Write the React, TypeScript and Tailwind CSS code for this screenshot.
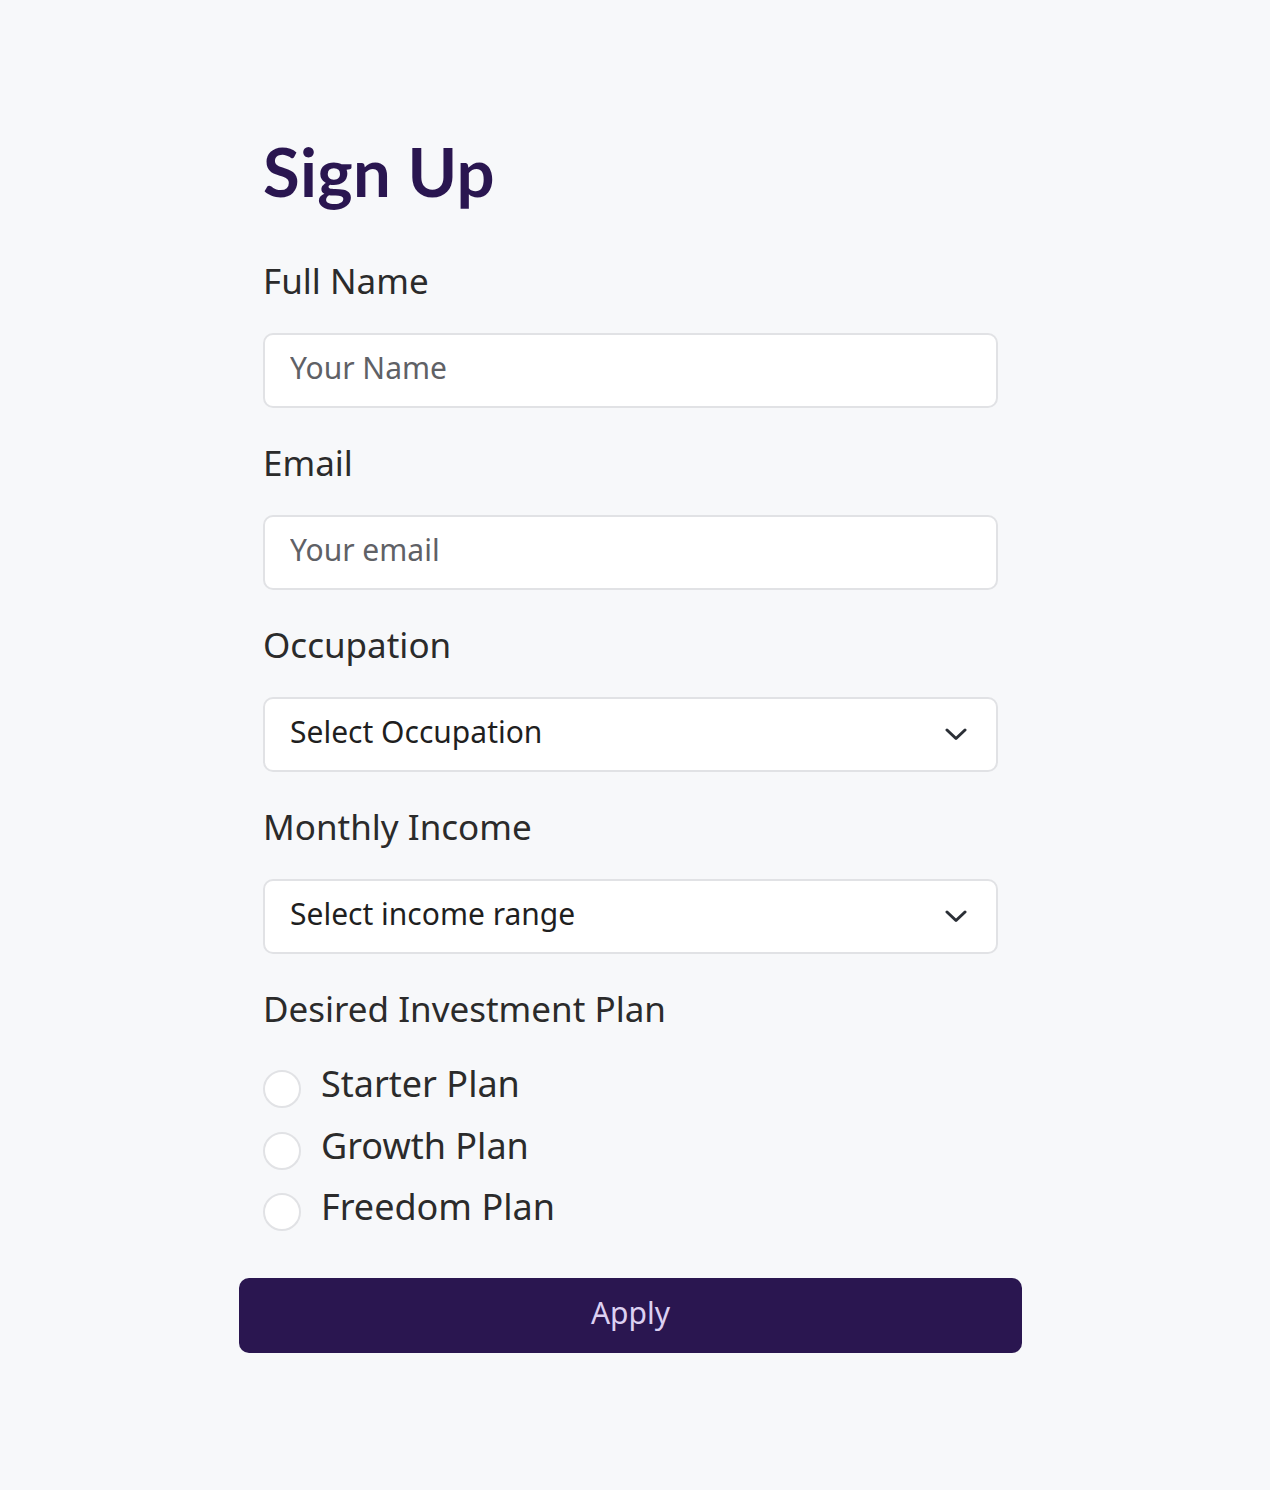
const plans = ["Starter Plan", "Growth Plan", "Freedom Plan"];

function Chevron() {
  return (
    <svg width="22" height="13" viewBox="0 0 22 13" fill="none" className="shrink-0">
      <path d="M2 2L11 10.5L20 2" stroke="#2b2f36" strokeWidth="3" strokeLinecap="round" strokeLinejoin="round" />
    </svg>
  );
}

export default function App() {
  return (
    <div className="min-h-[1490px] bg-[#f7f8fa] font-['Noto_Sans',sans-serif] text-[#2b2b2b]">
      <div className="ml-[239px] w-[783px] pt-[130px] pl-[24px]">
        <h1 className="font-['Lato',sans-serif] text-[67px] font-bold leading-[82px] tracking-[0.3px] text-[#2a1650]">
          Sign Up
        </h1>
        <form className="mt-[47px]">
          <label className="block text-[35px] leading-[44px]">Full Name</label>
          <input
            placeholder="Your Name"
            className="mt-[30px] block h-[75px] w-[735px] rounded-[10px] border-2 border-[#e1e2e5] bg-white px-[25px] pb-[6px] text-[30px] placeholder:text-[#5f6166] focus:outline-none"
          />
          <label className="mt-[33px] block text-[35px] leading-[44px]">Email</label>
          <input
            placeholder="Your email"
            className="mt-[30px] block h-[75px] w-[735px] rounded-[10px] border-2 border-[#e1e2e5] bg-white px-[25px] pb-[6px] text-[30px] placeholder:text-[#5f6166] focus:outline-none"
          />
          <label className="mt-[33px] block text-[35px] leading-[44px]">Occupation</label>
          <div className="mt-[30px] flex h-[75px] w-[735px] items-center justify-between rounded-[10px] border-2 border-[#e1e2e5] bg-white pl-[25px] pr-[29px] text-[30px] text-[#1f1f1f]">
            <span className="pb-[6px]">Select Occupation</span>
            <Chevron />
          </div>
          <label className="mt-[33px] block text-[35px] leading-[44px]">Monthly Income</label>
          <div className="mt-[30px] flex h-[75px] w-[735px] items-center justify-between rounded-[10px] border-2 border-[#e1e2e5] bg-white pl-[25px] pr-[29px] text-[30px] text-[#1f1f1f]">
            <span className="pb-[6px]">Select income range</span>
            <Chevron />
          </div>
          <label className="mt-[33px] block text-[35px] leading-[44px]">Desired Investment Plan</label>
          <div className="mt-[31px] flex flex-col gap-[17.5px]">
            {plans.map((p) => (
              <label key={p} className="flex h-[44px] items-center gap-[20px]">
                <span className="h-[38px] w-[38px] shrink-0 translate-y-[5px] rounded-full border-2 border-[#e1e2e5] bg-white" />
                <span className="text-[36px] leading-[44px]">{p}</span>
              </label>
            ))}
          </div>
          <button
            type="button"
            className="-ml-[24px] mt-[49px] flex h-[75px] w-[783px] items-center justify-center rounded-[10px] bg-[#2a1650] pb-[6px] text-[30px] text-[#dcd0f2]"
          >
            Apply
          </button>
        </form>
      </div>
    </div>
  );
}
